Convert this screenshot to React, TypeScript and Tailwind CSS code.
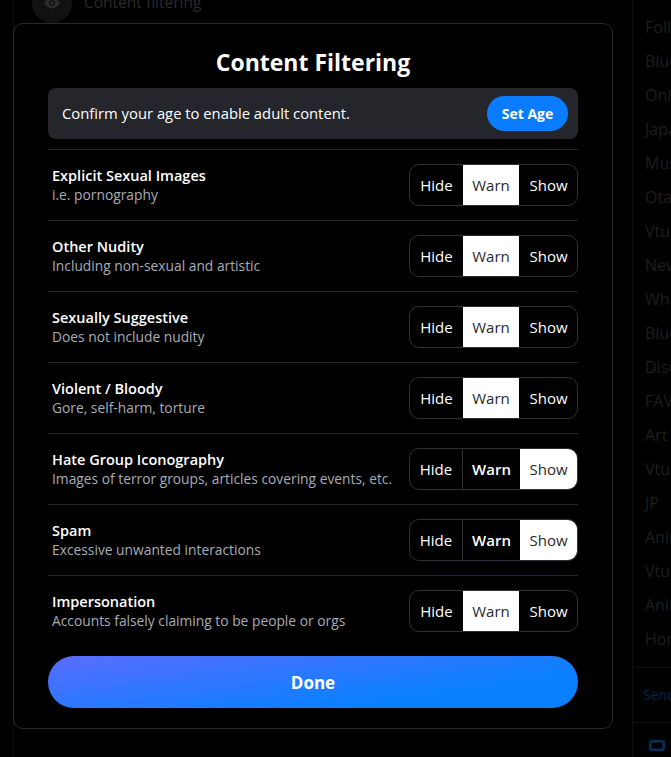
const FONT = "font-['Open_Sans','Noto_Sans',sans-serif]";

const feeds = ["Following", "Blue Sky", "Online", "Japan", "Music", "Otaku", "Vtubers", "News", "What's Hot", "Bluesky", "Discover", "FAVs", "Art", "Vtuber", "JP", "Anime", "Vtuber", "Anime", "Home"];

type Value = "Hide" | "Warn" | "Show";
const rows: { title: string; desc: string; value: Value }[] = [
  { title: "Explicit Sexual Images", desc: "i.e. pornography", value: "Warn" },
  { title: "Other Nudity", desc: "Including non-sexual and artistic", value: "Warn" },
  { title: "Sexually Suggestive", desc: "Does not include nudity", value: "Warn" },
  { title: "Violent / Bloody", desc: "Gore, self-harm, torture", value: "Warn" },
  { title: "Hate Group Iconography", desc: "Images of terror groups, articles covering events, etc.", value: "Show" },
  { title: "Spam", desc: "Excessive unwanted interactions", value: "Show" },
  { title: "Impersonation", desc: "Accounts falsely claiming to be people or orgs", value: "Warn" },
];

function Toggle({ value }: { value: Value }) {
  return (
    <div className="flex h-[42px] w-[169px] shrink-0 overflow-hidden rounded-[10px] border border-[#2e3036]">
      <div className={`flex w-[53px] items-center justify-center text-[15px] font-medium text-white ${value === "Show" ? "border-r border-[#2e3036]" : ""}`}>Hide</div>
      <div className={`flex w-[57px] items-center justify-center text-[15px] ${value === "Warn" ? "border-r border-black bg-white bg-clip-padding font-normal text-[#2a2a2a]" : "font-semibold text-white"}`}>Warn</div>
      <div className={`flex flex-1 items-center justify-center text-[15px] ${value === "Show" ? "bg-white font-normal text-[#2a2a2a]" : "font-medium text-white"}`}>Show</div>
    </div>
  );
}

export default function App() {
  return (
    <div className={`relative h-[757px] w-[671px] overflow-hidden bg-black ${FONT}`}>
      <div className="flex h-full">
        <div className="ml-[13px] flex w-[620px] shrink-0 flex-col border-x border-[#0e0e0e]">
          <div className="-mt-[17px] ml-[18px] flex items-center gap-3">
            <div className="flex h-[40px] w-[40px] items-center justify-center rounded-full bg-[#111111]">
              <svg width="18" height="18" viewBox="0 0 24 24" fill="#2b2b2b">
                <path d="M12 5C6.5 5 2.6 9.3 1.3 12c1.3 2.7 5.2 7 10.7 7s9.4-4.3 10.7-7C21.4 9.3 17.5 5 12 5zm0 11a4 4 0 1 1 0-8 4 4 0 0 1 0 8z" />
                <circle cx="12" cy="12" r="2" />
              </svg>
            </div>
            <span className="text-[15.5px] text-[#2a2a2a]">Content filtering</span>
          </div>
        </div>
        <div className="flex min-w-0 flex-1 flex-col overflow-hidden pt-[16px]">
          {feeds.map((f, i) => (
            <div key={i} className="h-[34px] whitespace-nowrap pl-[12px] text-[16px] leading-[22px] text-[#1e1e1e]">{f}</div>
          ))}
          <div className="mt-[5px] whitespace-nowrap border-t border-[#0e0e0e] pb-[17px] pl-[10px] pt-[17px] text-[14px] leading-[20px] text-[#04244a]">Send feedback</div>
          <div className="border-t border-[#0e0e0e] pl-[16px] pt-[17px]">
            <svg width="16" height="11" viewBox="0 0 16 11" fill="none" stroke="#082f5c" strokeWidth="2.5"><rect x="1.25" y="1.25" width="13.5" height="8.5" rx="2" /></svg>
          </div>
        </div>
      </div>

      <div className="absolute left-[13px] top-[23px] flex h-[706px] w-[600px] flex-col rounded-[10px] border border-[#2a2a2d] bg-black px-[34px]">
        <h1 className="mt-[20px] text-center text-[23px] font-bold leading-[36px] text-white">Content Filtering</h1>
        <div className="mt-[8px] flex h-[51px] items-center justify-between rounded-[8px] bg-[#24262c] pl-[14px] pr-[10px]">
          <span className="text-[14.8px] text-white">Confirm your age to enable adult content.</span>
          <button className="flex h-[35px] w-[81px] items-center justify-center rounded-full bg-[#0a7cff] text-[14px] font-bold text-white">Set Age</button>
        </div>
        <div className="mt-[10px] flex flex-col">
          {rows.map((r) => (
            <div key={r.title} className="flex h-[71px] items-center justify-between border-t border-[#26272b] pl-[4px]">
              <div className="flex flex-col pb-[2px]">
                <span className="text-[14.5px] font-semibold leading-[20px] text-white">{r.title}</span>
                <span className="text-[13.8px] leading-[17px] text-[#a8acb4]">{r.desc}</span>
              </div>
              <Toggle value={r.value} />
            </div>
          ))}
        </div>
        <button className="mt-[10px] flex h-[52px] items-center justify-center rounded-full bg-[linear-gradient(172deg,#5b6cff_0%,#0a80ff_72%)] pt-[1px] text-[17px] font-bold text-white">Done</button>
      </div>
    </div>
  );
}
